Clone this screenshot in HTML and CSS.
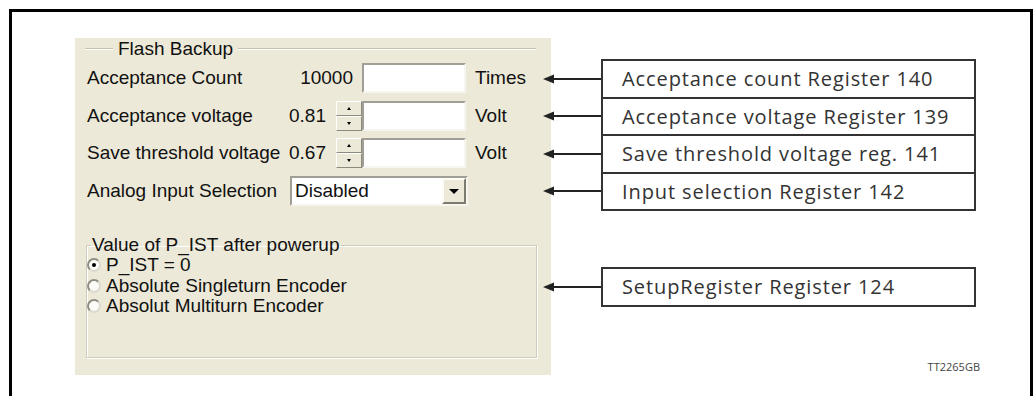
FILE: index.html
```html
<!DOCTYPE html>
<html lang="en">
<head>
    <meta charset="UTF-8">
    <meta name="viewport" content="width=device-width, initial-scale=1.0">
    <title>Flash Backup Registers</title>
    <link rel="stylesheet" href="styles.css">
</head>
<body>
    <div class="frame">
        <div class="panel">
            <div class="group-title">
                <span class="etch short"></span>
                <span>Flash Backup</span>
                <span class="etch"></span>
            </div>

            <div class="rows">
                <div class="row">
                    <span class="label">Acceptance Count</span>
                    <span class="value wide">10000</span>
                    <span class="field"></span>
                    <span class="unit">Times</span>
                </div>
                <div class="row">
                    <span class="label">Acceptance voltage</span>
                    <span class="value">0.81</span>
                    <span class="spin"><span class="spin-btn up"></span><span class="spin-btn down"></span></span>
                    <span class="field"></span>
                    <span class="unit">Volt</span>
                </div>
                <div class="row">
                    <span class="label">Save threshold voltage</span>
                    <span class="value">0.67</span>
                    <span class="spin"><span class="spin-btn up"></span><span class="spin-btn down"></span></span>
                    <span class="field"></span>
                    <span class="unit">Volt</span>
                </div>
                <div class="row">
                    <span class="label">Analog Input Selection</span>
                    <div class="combo">
                        <span class="combo-text">Disabled</span>
                        <span class="combo-btn"></span>
                    </div>
                </div>
            </div>

            <fieldset class="radio-group">
                <legend>Value of P_IST after powerup</legend>
                <div class="radio"><span class="dot checked"></span>P_IST = 0</div>
                <div class="radio"><span class="dot"></span>Absolute Singleturn Encoder</div>
                <div class="radio"><span class="dot"></span>Absolut Multiturn Encoder</div>
            </fieldset>
        </div>

        <div class="callouts">
            <div class="stack">
                <div class="callout">
                    <svg class="arrow" width="58" height="10" viewBox="0 0 58 10"><line x1="9" y1="5" x2="58" y2="5"/><polygon points="0,5 11,0.5 11,9.5"/></svg>
                    <div class="box">Acceptance count Register 140</div>
                </div>
                <div class="callout">
                    <svg class="arrow" width="58" height="10" viewBox="0 0 58 10"><line x1="9" y1="5" x2="58" y2="5"/><polygon points="0,5 11,0.5 11,9.5"/></svg>
                    <div class="box">Acceptance voltage Register 139</div>
                </div>
                <div class="callout">
                    <svg class="arrow" width="58" height="10" viewBox="0 0 58 10"><line x1="9" y1="5" x2="58" y2="5"/><polygon points="0,5 11,0.5 11,9.5"/></svg>
                    <div class="box">Save threshold voltage reg. 141</div>
                </div>
                <div class="callout">
                    <svg class="arrow" width="58" height="10" viewBox="0 0 58 10"><line x1="9" y1="5" x2="58" y2="5"/><polygon points="0,5 11,0.5 11,9.5"/></svg>
                    <div class="box">Input selection Register 142</div>
                </div>
            </div>
            <div class="callout single">
                <svg class="arrow" width="58" height="10" viewBox="0 0 58 10"><line x1="9" y1="5" x2="58" y2="5"/><polygon points="0,5 11,0.5 11,9.5"/></svg>
                <div class="box">SetupRegister Register 124</div>
            </div>
            <div class="ref">TT2265GB</div>
        </div>
    </div>
</body>
</html>
```

FILE: styles.css
```css
body {
    margin: 0;
    background-color: #fff;
    overflow: hidden;
}
.frame {
    display: flex;
    width: 1018px;
    height: 384px;
    margin: 9px 0 0 9px;
    border: 3px solid #000;
    border-bottom: none;
}

/* dialog panel */
.panel {
    width: 476px;
    height: 337px;
    margin: 26px 0 0 63px;
    padding: 0 15px 0 10px;
    box-sizing: border-box;
    background-color: #ece9d8;
    font-family: "Liberation Sans", Arial, sans-serif;
    font-size: 19px;
    color: #111;
}
.group-title {
    display: flex;
    align-items: center;
    gap: 5px;
    height: 22px;
    line-height: 22px;
}
.etch {
    flex: 1;
    border-top: 1px solid #c5c2b2;
    border-bottom: 1px solid #fff;
}
.etch.short {
    flex: 0 0 28px;
}
.rows {
    display: flex;
    flex-direction: column;
    gap: 7.5px;
    margin-top: 3px;
}
.row {
    display: grid;
    grid-template-columns: 199px 40px 36px 104px auto;
    align-items: center;
    height: 30px;
    padding-left: 2px;
}
.value {
    text-align: right;
}
.value.wide {
    grid-column: 2 / 4;
    padding-right: 9px;
}
.field {
    height: 30px;
    box-sizing: border-box;
    background-color: #fff;
    border: 2px solid;
    border-color: #a19f95 #f6f5ef #f6f5ef #a19f95;
}
.unit {
    margin-left: 9px;
}
.spin {
    justify-self: end;
    display: flex;
    flex-direction: column;
    width: 26px;
    height: 30px;
}
.spin-btn {
    flex: 1;
    position: relative;
    box-sizing: border-box;
    border: 1px solid;
    border-color: #fff #8d8a7e #8d8a7e #fff;
    background-color: #ece9d8;
}
.spin-btn::after {
    content: "";
    position: absolute;
    left: 10px;
    top: 5px;
    border-left: 2.5px solid transparent;
    border-right: 2.5px solid transparent;
}
.spin-btn.up::after {
    border-bottom: 3px solid #000;
}
.spin-btn.down::after {
    border-top: 3px solid #000;
}
.combo {
    grid-column: 2 / 6;
    display: flex;
    width: 178px;
    height: 30px;
    margin-left: 4px;
    box-sizing: border-box;
    background-color: #fff;
    border: 2px solid;
    border-color: #a19f95 #f6f5ef #f6f5ef #a19f95;
}
.combo-text {
    flex: 1;
    padding-left: 3px;
    line-height: 26px;
}
.combo-btn {
    position: relative;
    width: 24px;
    box-sizing: border-box;
    border: 2px solid;
    border-color: #fdfcf6 #7d7a6e #7d7a6e #fdfcf6;
    background-color: #ece9d8;
}
.combo-btn::after {
    content: "";
    position: absolute;
    left: 5px;
    top: 9px;
    border-left: 5px solid transparent;
    border-right: 5px solid transparent;
    border-top: 5px solid #000;
}

/* radio group */
.radio-group {
    width: 451px;
    margin: 29.5px 0 0 1px;
    padding: 0 0 40px 0;
    box-sizing: border-box;
    border: 1px solid #cfccbd;
    box-shadow: inset 1px 1px #fff, 1px 1px #fff;
}
.radio-group legend {
    margin-left: 4px;
    padding: 0 1px;
    line-height: 20px;
}
.radio {
    display: flex;
    align-items: center;
    gap: 5px;
    height: 20.5px;
}
.dot {
    flex: none;
    position: relative;
    width: 14px;
    height: 14px;
    box-sizing: border-box;
    border-radius: 50%;
    background-color: #fbfbf8;
    border: 2px solid;
    border-color: #8f8d82 #dcdad0 #dcdad0 #8f8d82;
}
.dot.checked::after {
    content: "";
    position: absolute;
    left: 3px;
    top: 3px;
    width: 4px;
    height: 4px;
    border-radius: 50%;
    background-color: #000;
}

/* callouts on the right */
.callouts {
    display: flex;
    flex-direction: column;
    margin: 47px 0 0 -8px;
    font-family: "Open Sans", sans-serif;
    color: #333;
}
.callout {
    display: flex;
    align-items: center;
}
.stack .callout + .callout {
    margin-top: -2px;
}
.callout.single {
    margin-top: 56px;
}
.arrow line {
    stroke: #222;
    stroke-width: 2;
}
.arrow polygon {
    fill: #222;
}
.box {
    width: 375px;
    height: 39.5px;
    box-sizing: border-box;
    padding-left: 19px;
    border: 2px solid #333;
    background-color: #fff;
    font-size: 20px;
    letter-spacing: 0.9px;
    line-height: 35px;
}
.ref {
    margin: 54px -4px 0 0;
    text-align: right;
    font-size: 11px;
    line-height: 12px;
    color: #444;
}
```
